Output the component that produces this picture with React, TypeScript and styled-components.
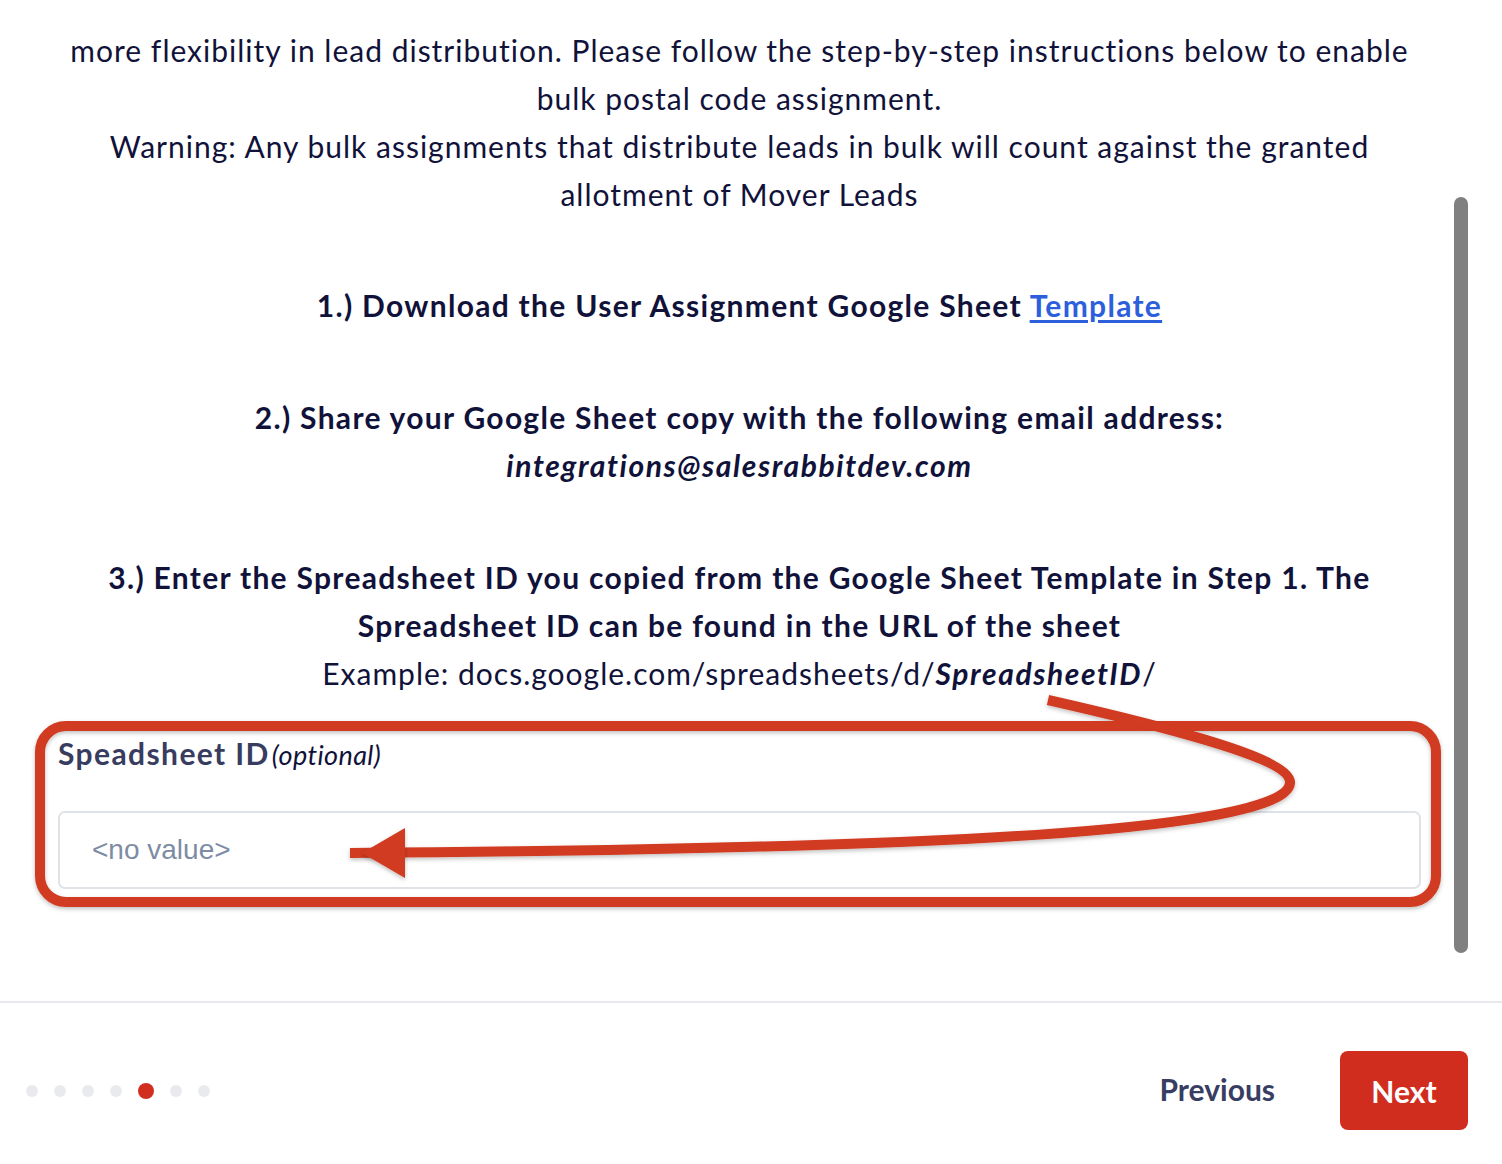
import React from 'react'
import styled, { createGlobalStyle } from 'styled-components'

const GlobalStyle = createGlobalStyle`
  html, body {
    margin: 0;
    padding: 0;
    background: #ffffff;
  }
  body {
    font-family: Lato, "Noto Sans", sans-serif;
    color: #11123a;
  }
`

const Page = styled.div`
  position: relative;
  width: 1502px;
  height: 1164px;
  display: flex;
  flex-direction: column;
  overflow: hidden;
`

const ScrollArea = styled.div`
  position: relative;
  height: 1001px;
  flex-shrink: 0;
  overflow: hidden;
`

const ScrollThumb = styled.div`
  position: absolute;
  left: 1454px;
  top: 197px;
  width: 14px;
  height: 756px;
  border-radius: 7px;
  background: #808080;
`

const Content = styled.div`
  width: 1363px;
  padding: 26px 0 0 58px;
  text-align: center;
`

const Intro = styled.p`
  margin: 0;
  font-size: 30px;
  line-height: 48px;
  font-weight: 400;
  letter-spacing: 1px;
  white-space: nowrap;
`

const Step = styled.p<{ $gap?: number }>`
  margin: ${p => p.$gap ?? 64}px 0 0;
  font-size: 30px;
  line-height: 48px;
  font-weight: 700;
  letter-spacing: 1.3px;
  white-space: nowrap;
`

const Light = styled.span`
  font-weight: 400;
  letter-spacing: 1px;
`

const Em = styled.em`
  font-weight: 700;
  font-style: italic;
  letter-spacing: 1.6px;
`

const Link = styled.a`
  color: #2d5fdc;
  text-decoration: underline;
  text-underline-offset: 3px;
  font-weight: 700;
`

const Field = styled.div`
  margin-top: 32px;
  text-align: left;
`

const Label = styled.div`
  font-size: 30px;
  line-height: 48px;
  font-weight: 700;
  letter-spacing: 1.4px;
  color: #383d60;
`

const Optional = styled.i`
  font-weight: 400;
  font-size: 27px;
  letter-spacing: 0.4px;
  color: #11123a;
  margin-left: 2px;
`

const Input = styled.input`
  box-sizing: border-box;
  display: block;
  margin-top: 32px;
  width: 1363px;
  height: 78px;
  padding: 0 32px;
  border: 2px solid #dfe3e8;
  border-radius: 7px;
  font-family: "Liberation Sans", Arial, sans-serif;
  font-size: 28px;
  outline: none;
  &::placeholder {
    color: #7d8ca4;
  }
`

const Footer = styled.div`
  flex: 1;
  border-top: 2px solid #e8e9ed;
  display: flex;
  align-items: center;
  justify-content: space-between;
  padding: 14px 34px 0 26px;
`

const Dots = styled.div`
  display: flex;
  align-items: center;
  gap: 16px;
`

const Dot = styled.span<{ $active?: boolean }>`
  width: ${p => (p.$active ? 16 : 12)}px;
  height: ${p => (p.$active ? 16 : 12)}px;
  border-radius: 50%;
  background: ${p => (p.$active ? '#d12e20' : '#e9eaee')};
`

const Buttons = styled.div`
  display: flex;
  align-items: center;
`

const PrevButton = styled.button`
  background: none;
  border: none;
  font-family: Lato, sans-serif;
  font-size: 30px;
  font-weight: 700;
  color: #383d62;
  padding: 0 65px 4px 0;
  cursor: pointer;
`

const NextButton = styled.button`
  width: 128px;
  height: 79px;
  border: none;
  border-radius: 8px;
  background: #d12d1f;
  color: #ffffff;
  font-family: Lato, sans-serif;
  font-size: 30px;
  font-weight: 700;
  cursor: pointer;
`

const Annotation = styled.svg`
  position: absolute;
  left: 0;
  top: 0;
  pointer-events: none;
`

const App = () => (
  <>
    <GlobalStyle />
    <Page>
      <ScrollArea>
        <Content>
          <Intro>
            more flexibility in lead distribution. Please follow the step-by-step instructions below to enable
            <br />
            bulk postal code assignment.
            <br />
            Warning: Any bulk assignments that distribute leads in bulk will count against the granted
            <br />
            allotment of Mover Leads
          </Intro>
          <Step $gap={63}>
            1.) Download the User Assignment Google Sheet <Link href="#">Template</Link>
          </Step>
          <Step>
            2.) Share your Google Sheet copy with the following email address:
            <br />
            <Em>integrations@salesrabbitdev.com</Em>
          </Step>
          <Step>
            3.) Enter the Spreadsheet ID you copied from the Google Sheet Template in Step 1. The
            <br />
            Spreadsheet ID can be found in the URL of the sheet
            <br />
            <Light>
              Example: docs.google.com/spreadsheets/d/<Em>SpreadsheetID</Em>/
            </Light>
          </Step>
          <Field>
            <Label>
              Speadsheet ID<Optional>(optional)</Optional>
            </Label>
            <Input placeholder="<no value>" />
          </Field>
        </Content>
        <ScrollThumb />
      </ScrollArea>
      <Footer>
        <Dots>
          {[0, 1, 2, 3, 4, 5, 6].map(i => (
            <Dot key={i} $active={i === 4} />
          ))}
        </Dots>
        <Buttons>
          <PrevButton>Previous</PrevButton>
          <NextButton>Next</NextButton>
        </Buttons>
      </Footer>
      <Annotation width="1502" height="1164" viewBox="0 0 1502 1164">
        <defs>
          <filter id="shadow" x="-5%" y="-20%" width="110%" height="140%">
            <feDropShadow dx="0" dy="2" stdDeviation="2" floodColor="#000" floodOpacity="0.25" />
          </filter>
        </defs>
        <g filter="url(#shadow)" stroke="#d03a20" fill="none" strokeWidth="10">
          <rect x="40" y="726" width="1396" height="176" rx="26" />
          <path
            d="M1048 700 C1180 730 1292 760 1290 783 C1288 812 1150 832 900 842 C700 850 500 852 350 853"
            strokeLinecap="butt"
          />
        </g>
        <polygon points="362,853 405,828 405,878" fill="#d03a20" filter="url(#shadow)" />
      </Annotation>
    </Page>
  </>
)

export default App
